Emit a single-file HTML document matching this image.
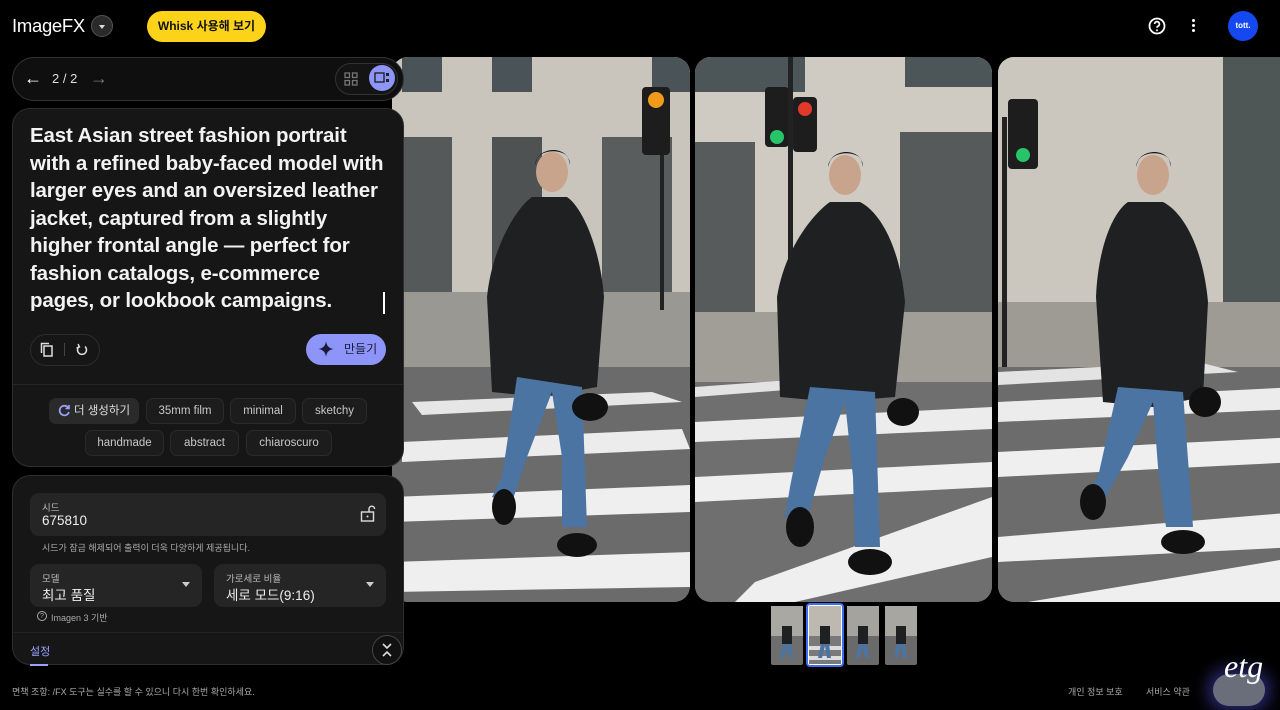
<!DOCTYPE html>
<html><head><meta charset="utf-8">
<style>
*{box-sizing:border-box;margin:0;padding:0}
body{width:1280px;height:710px;background:#000;overflow:hidden;position:relative;font-family:"Liberation Sans","Noto Sans CJK KR",sans-serif;color:#e3e3e3}
.abs{position:absolute}
.photo{position:absolute;top:57px;height:545px;border-radius:16px;overflow:hidden}
.panel{position:absolute;left:12px;width:392px;background:#161616;border:1px solid #2e2e2e;border-radius:18px}
.chip{position:absolute;height:26px;border:1px solid #2a2a2a;background:#1c1c1c;border-radius:7px;font-size:11.5px;color:#c8c8c8;line-height:24px;text-align:center}
.field{position:absolute;background:#252525;border-radius:9px}
.lab{position:absolute;font-size:9.5px;color:#bbb}
.val{position:absolute;font-size:13.5px;color:#eee}
</style></head><body>

<!-- photos -->
<svg class="photo" style="left:392px;width:298px" viewBox="0 0 298 545" preserveAspectRatio="none">
<rect width="298" height="545" fill="#8c8a86"/>
<rect width="298" height="240" fill="#c9c5bd"/>
<rect x="10" y="0" width="40" height="35" fill="#4a5458"/><rect x="100" y="0" width="40" height="35" fill="#4a5458"/><rect x="260" y="0" width="40" height="35" fill="#4a5458"/>
<rect x="0" y="80" width="60" height="160" fill="#55595a"/><rect x="100" y="80" width="50" height="160" fill="#4f5253"/><rect x="210" y="80" width="70" height="160" fill="#5a5d5d"/>
<rect x="0" y="235" width="298" height="80" fill="#9a9893"/>
<rect x="0" y="310" width="298" height="235" fill="#6b6b6b"/>
<polygon points="20,345 260,335 290,345 30,358" fill="#e6e6e6"/>
<polygon points="10,385 290,372 298,392 10,405" fill="#ececec"/>
<polygon points="0,440 298,428 298,455 0,465" fill="#efefef"/>
<polygon points="0,505 298,495 298,530 0,535" fill="#efefef"/>
<rect x="250" y="30" width="28" height="68" rx="4" fill="#1d1d1d"/><circle cx="264" cy="43" r="8" fill="#f29a1a"/>
<rect x="268" y="98" width="4" height="155" fill="#222"/>
<path d="M140,140 C125,150 100,190 95,240 L100,335 L150,340 L205,330 L212,240 C208,190 190,150 175,140 Z" fill="#1f2022"/>
<path d="M125,320 L110,420 L100,440 L120,445 L135,400 L160,335 L170,400 L170,470 L195,470 L190,330 Z" fill="#4b74a3"/>
<ellipse cx="160" cy="115" rx="16" ry="20" fill="#c9a48d"/><path d="M143,108 C145,88 178,88 178,108 L176,100 C170,92 150,92 145,102Z" fill="#1a1a1a"/>
<ellipse cx="112" cy="450" rx="12" ry="18" fill="#111"/><ellipse cx="185" cy="488" rx="20" ry="12" fill="#111"/>
<ellipse cx="198" cy="350" rx="18" ry="14" fill="#111"/>
</svg>

<svg class="photo" style="left:695px;width:297px" viewBox="0 0 297 545" preserveAspectRatio="none">
<rect width="297" height="545" fill="#8a8986"/>
<rect width="297" height="255" fill="#cfcbc3"/>
<rect x="0" y="0" width="110" height="35" fill="#4c5658"/><rect x="210" y="0" width="87" height="30" fill="#4c5658"/>
<rect x="0" y="85" width="60" height="170" fill="#585b5b"/><rect x="205" y="75" width="92" height="180" fill="#575a5a"/>
<rect x="0" y="255" width="297" height="70" fill="#a19e98"/>
<rect x="0" y="325" width="297" height="220" fill="#6f6f6f"/>
<polygon points="0,330 110,322 130,330 0,340" fill="#e3e3e3"/>
<polygon points="0,365 297,350 297,372 0,385" fill="#ececec"/>
<polygon points="0,420 297,405 297,430 0,445" fill="#efefef"/>
<polygon points="60,525 297,440 297,500 100,545 40,545" fill="#efefef"/>
<rect x="70" y="30" width="24" height="60" rx="4" fill="#1d1d1d"/><circle cx="82" cy="80" r="7" fill="#27c46a"/>
<rect x="98" y="40" width="24" height="55" rx="4" fill="#1d1d1d"/><circle cx="110" cy="52" r="7" fill="#e23a2a"/>
<rect x="93" y="0" width="5" height="300" fill="#222"/>
<path d="M135,145 C120,155 90,190 82,240 L85,340 L140,345 L200,340 L210,245 C205,190 185,155 165,145 Z" fill="#1f2022"/>
<path d="M115,330 L95,430 L90,460 L112,462 L130,400 L150,345 L158,420 L160,490 L185,490 L180,335 Z" fill="#4b74a3"/>
<ellipse cx="150" cy="118" rx="16" ry="20" fill="#c9a48d"/><path d="M133,110 C135,90 168,90 168,110 L166,102 C160,94 140,94 135,104Z" fill="#1a1a1a"/>
<ellipse cx="105" cy="470" rx="14" ry="20" fill="#111"/><ellipse cx="175" cy="505" rx="22" ry="13" fill="#111"/>
<ellipse cx="208" cy="355" rx="16" ry="14" fill="#111"/>
</svg>

<svg class="photo" style="left:998px;width:300px" viewBox="0 0 300 545" preserveAspectRatio="none">
<rect width="300" height="545" fill="#8a8986"/>
<rect width="300" height="245" fill="#cbc7bf"/>
<rect x="225" y="0" width="75" height="245" fill="#4e5656"/>
<rect x="0" y="245" width="300" height="70" fill="#9e9b95"/>
<rect x="0" y="310" width="300" height="235" fill="#6c6c6c"/>
<polygon points="0,315 200,305 240,315 0,328" fill="#e3e3e3"/>
<polygon points="0,345 300,330 300,352 0,365" fill="#ececec"/>
<polygon points="0,395 300,380 300,405 0,420" fill="#efefef"/>
<polygon points="0,480 300,455 300,490 0,505" fill="#efefef"/>
<polygon points="30,545 300,500 300,545" fill="#efefef"/>
<rect x="10" y="42" width="30" height="70" rx="4" fill="#1d1d1d"/><circle cx="25" cy="98" r="7" fill="#27c46a"/>
<rect x="4" y="60" width="5" height="250" fill="#222"/>
<path d="M130,145 C115,155 100,190 98,240 L105,345 L155,350 L205,340 L210,245 C205,190 185,155 165,145 Z" fill="#1f2022"/>
<path d="M120,330 L100,420 L85,440 L105,445 L130,400 L155,345 L160,410 L168,470 L195,470 L185,335 Z" fill="#4b74a3"/>
<ellipse cx="155" cy="118" rx="16" ry="20" fill="#c9a48d"/><path d="M138,110 C140,90 173,90 173,110 L171,102 C165,94 145,94 140,104Z" fill="#1a1a1a"/>
<ellipse cx="95" cy="445" rx="13" ry="18" fill="#111"/><ellipse cx="185" cy="485" rx="22" ry="12" fill="#111"/>
<ellipse cx="207" cy="345" rx="16" ry="15" fill="#111"/>
</svg>

<!-- header -->
<div class="abs" style="left:12px;top:15px;font-size:18.5px;color:#fff;letter-spacing:-0.3px">ImageFX</div>
<div class="abs" style="left:91px;top:15px;width:22px;height:22px;border-radius:50%;background:#2a2a2a;border:1px solid #555"><div style="position:absolute;left:7px;top:9px;border:3px solid transparent;border-top:4px solid #ddd"></div></div>
<div class="abs" style="left:147px;top:11px;width:119px;height:31px;border-radius:16px;background:#fdd31a;color:#111;font-size:12px;line-height:31px;text-align:center;font-weight:bold">Whisk 사용해 보기</div>
<svg class="abs" style="left:1147px;top:16px" width="20" height="20" viewBox="0 0 20 20"><circle cx="10" cy="10" r="7.5" fill="none" stroke="#fff" stroke-width="1.8"/><path d="M7.6,8 a2.4,2.4 0 1 1 3.4,2.2 c-.8.4-1 .9-1 1.6" fill="none" stroke="#fff" stroke-width="1.7"/><circle cx="10" cy="14.2" r="1" fill="#fff"/></svg>
<div class="abs" style="left:1192px;top:19px;width:3px;height:3px;border-radius:50%;background:#fff;box-shadow:0 5px 0 #fff,0 10px 0 #fff"></div>
<div class="abs" style="left:1228px;top:11px;width:30px;height:30px;border-radius:50%;background:#1548f0;color:#fff;font-size:8px;font-weight:bold;line-height:30px;text-align:center">tott.</div>

<!-- nav bar -->
<div class="abs" style="left:12px;top:57px;width:392px;height:44px;border-radius:22px;background:#0f0f0f;border:1px solid #333"></div>
<div class="abs" style="left:24px;top:68px;font-size:18px;color:#fff">←</div>
<div class="abs" style="left:52px;top:71px;font-size:13px;color:#ddd">2 / 2</div>
<div class="abs" style="left:90px;top:68px;font-size:18px;color:#777">→</div>
<div class="abs" style="left:335px;top:63px;width:63px;height:32px;border-radius:16px;border:1px solid #333;background:#141414"></div>
<svg class="abs" style="left:344px;top:72px" width="14" height="14"><g fill="none" stroke="#777" stroke-width="1.3"><rect x="1" y="1" width="4.5" height="4.5"/><rect x="8.5" y="1" width="4.5" height="4.5"/><rect x="1" y="8.5" width="4.5" height="4.5"/><rect x="8.5" y="8.5" width="4.5" height="4.5"/></g></svg>
<div class="abs" style="left:369px;top:65px;width:26px;height:26px;border-radius:50%;background:#8e95f8"></div>
<svg class="abs" style="left:374px;top:71px" width="16" height="14"><rect x="1" y="2" width="9" height="9" fill="none" stroke="#222" stroke-width="1.4"/><rect x="12" y="2" width="3" height="3" fill="#222"/><rect x="12" y="8" width="3" height="3" fill="#222"/></svg>

<!-- prompt panel -->
<div class="panel" style="top:108px;height:359px"></div>
<div class="abs" style="left:30px;top:122px;font-size:20.5px;font-weight:bold;line-height:27.5px;color:#f2f2f2;white-space:nowrap;letter-spacing:-0.15px">East Asian street fashion portrait<br>with a refined baby-faced model with<br>larger eyes and an oversized leather<br>jacket, captured from a slightly<br>higher frontal angle — perfect for<br>fashion catalogs, e-commerce<br>pages, or lookbook campaigns.</div>
<div class="abs" style="left:383px;top:292px;width:2px;height:22px;background:#fff"></div>
<div class="abs" style="left:30px;top:334px;width:70px;height:32px;border-radius:16px;border:1px solid #2c2c2c"></div>
<svg class="abs" style="left:40px;top:342px" width="14" height="16"><rect x="4" y="4" width="8" height="10" fill="none" stroke="#ddd" stroke-width="1.5"/><path d="M1.5,11 V1.5 H9" fill="none" stroke="#ddd" stroke-width="1.5"/></svg>
<div class="abs" style="left:64px;top:343px;width:1px;height:13px;background:#444"></div>
<svg class="abs" style="left:75px;top:343px" width="14" height="14"><path d="M4,3.5 A4.5,4.5 0 1 0 10,3.5" fill="none" stroke="#ddd" stroke-width="1.5"/><path d="M3,1 L4.5,4 L1.5,5" fill="none" stroke="#ddd" stroke-width="1.4"/></svg>
<div class="abs" style="left:306px;top:334px;width:80px;height:31px;border-radius:16px;background:#8e95f8;color:#1a1a3a;font-size:12px;line-height:31px;padding-left:38px">만들기</div>
<svg class="abs" style="left:318px;top:341px" width="16" height="16"><path d="M8,0 C8.6,5 11,7.4 16,8 C11,8.6 8.6,11 8,16 C7.4,11 5,8.6 0,8 C5,7.4 7.4,5 8,0Z" fill="#1a1a3a"/></svg>
<div class="abs" style="left:13px;top:384px;width:390px;height:1px;background:#262626"></div>
<div class="chip" style="left:49px;top:398px;width:90px;background:#2a2a2a;color:#ddd;padding-left:16px">더 생성하기</div>
<svg class="abs" style="left:58px;top:404px" width="13" height="13"><path d="M10.5,4 A4.8,4.8 0 1 0 11,8" fill="none" stroke="#9aa1ff" stroke-width="1.7"/><path d="M11,1 V4.5 H7.5" fill="none" stroke="#9aa1ff" stroke-width="1.6"/></svg>
<div class="chip" style="left:146px;top:398px;width:78px">35mm film</div>
<div class="chip" style="left:230px;top:398px;width:66px">minimal</div>
<div class="chip" style="left:302px;top:398px;width:65px">sketchy</div>
<div class="chip" style="left:85px;top:430px;width:79px">handmade</div>
<div class="chip" style="left:170px;top:430px;width:69px">abstract</div>
<div class="chip" style="left:246px;top:430px;width:86px">chiaroscuro</div>

<!-- settings panel -->
<div class="panel" style="top:475px;height:190px"></div>
<div class="field" style="left:30px;top:493px;width:356px;height:43px"></div>
<div class="lab" style="left:42px;top:500px">시드</div>
<div class="val" style="left:42px;top:513px">675810</div>
<svg class="abs" style="left:360px;top:505px" width="16" height="18"><rect x="1.5" y="7" width="12" height="9" fill="none" stroke="#ddd" stroke-width="1.4"/><path d="M9,7 V4 a2.8,2.8 0 0 1 5.6,0" fill="none" stroke="#ddd" stroke-width="1.4"/><circle cx="7.5" cy="11.5" r="1" fill="#ddd"/></svg>
<div class="abs" style="left:42px;top:541px;font-size:9px;color:#aaa">시드가 잠금 해제되어 출력이 더욱 다양하게 제공됩니다.</div>
<div class="field" style="left:30px;top:564px;width:172px;height:43px"></div>
<div class="lab" style="left:42px;top:571px">모델</div>
<div class="val" style="left:42px;top:584px">최고 품질</div>
<div class="abs" style="left:182px;top:582px;border:4px solid transparent;border-top:5px solid #ccc"></div>
<div class="field" style="left:214px;top:564px;width:172px;height:43px"></div>
<div class="lab" style="left:226px;top:571px">가로세로 비율</div>
<div class="val" style="left:226px;top:584px">세로 모드(9:16)</div>
<div class="abs" style="left:366px;top:582px;border:4px solid transparent;border-top:5px solid #ccc"></div>
<div class="abs" style="left:37px;top:611px;width:10px;height:10px;border-radius:50%;border:1px solid #aaa;font-size:7px;text-align:center;line-height:9px;color:#aaa">?</div>
<div class="abs" style="left:51px;top:611px;font-size:9px;color:#aaa">Imagen 3 기반</div>
<div class="abs" style="left:13px;top:632px;width:390px;height:1px;background:#222"></div>
<div class="abs" style="left:30px;top:643px;font-size:11px;color:#9aa1ff">설정</div>
<div class="abs" style="left:30px;top:664px;width:18px;height:2px;background:#9aa1ff"></div>
<div class="abs" style="left:372px;top:635px;width:30px;height:30px;border-radius:50%;border:1px solid #444;background:#111"></div>
<svg class="abs" style="left:380px;top:642px" width="14" height="16"><path d="M3,2 L7,6 L11,2 M3,14 L7,10 L11,14" fill="none" stroke="#ddd" stroke-width="1.6"/></svg>

<!-- thumbnails -->
<svg class="abs" style="left:771px;top:606px" width="32" height="59"><rect width="32" height="59" rx="2" fill="#6e6e6e"/><rect width="32" height="30" fill="#aaa8a2"/><path d="M11,20 h10 v18 h-10z" fill="#1f2022"/><path d="M12,38 l-3,14 h4 l3,-12 l2,12 h4 l-2,-14z" fill="#4b74a3"/></svg>
<div class="abs" style="left:806px;top:603px;width:38px;height:64px;border:2px solid #3b6df5;border-radius:4px;background:#fff"></div>
<svg class="abs" style="left:809px;top:606px" width="32" height="58"><rect width="32" height="58" fill="#7a7a7a"/><rect width="32" height="30" fill="#bdb9b1"/><rect y="40" width="32" height="4" fill="#ddd"/><rect y="50" width="32" height="4" fill="#ddd"/><path d="M11,20 h10 v18 h-10z" fill="#1f2022"/><path d="M12,38 l-3,14 h4 l3,-12 l2,12 h4 l-2,-14z" fill="#4b74a3"/></svg>
<svg class="abs" style="left:847px;top:606px" width="32" height="59"><rect width="32" height="59" rx="2" fill="#6a6a6a"/><rect width="32" height="30" fill="#a5a39d"/><path d="M11,20 h10 v18 h-10z" fill="#1f2022"/><path d="M12,38 l-3,14 h4 l3,-12 l2,12 h4 l-2,-14z" fill="#4b74a3"/></svg>
<svg class="abs" style="left:885px;top:606px" width="32" height="59"><rect width="32" height="59" rx="2" fill="#6a6a6a"/><rect width="32" height="30" fill="#a8a6a0"/><path d="M11,20 h10 v18 h-10z" fill="#1f2022"/><path d="M12,38 l-3,14 h4 l3,-12 l2,12 h4 l-2,-14z" fill="#4b74a3"/></svg>

<!-- footer -->
<div class="abs" style="left:12px;top:685px;font-size:9px;color:#aaa">면책 조항: /FX 도구는 실수를 할 수 있으니 다시 한번 확인하세요.</div>
<div class="abs" style="left:1068px;top:685px;font-size:9px;color:#aaa">개인 정보 보호</div>
<div class="abs" style="left:1146px;top:685px;font-size:9px;color:#aaa">서비스 약관</div>
<div class="abs" style="left:1213px;top:674px;width:52px;height:32px;border-radius:16px;background:#6a6e7a;box-shadow:0 0 16px 6px rgba(80,80,220,.5)"></div>
<div class="abs" style="left:1224px;top:648px;font-family:'Liberation Serif',serif;font-style:italic;font-size:32px;color:#fff">etg</div>
</body></html>
